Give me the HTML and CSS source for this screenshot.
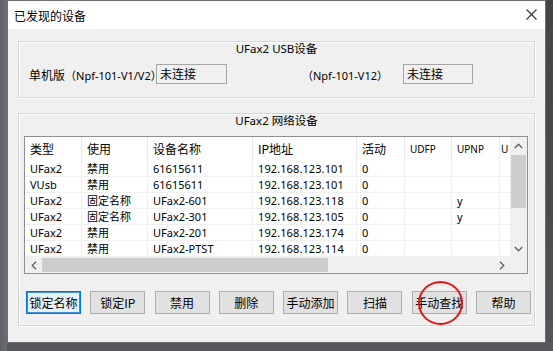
FILE: index.html
```html
<!DOCTYPE html>
<html lang="zh-CN">
<head>
<meta charset="utf-8">
<title>已发现的设备</title>
<link rel="stylesheet" href="styles.css">
</head>
<body>
<div class="screen">
  <div class="dialog">
    <div class="titlebar">
      <span class="title">已发现的设备</span>
      <svg class="close" width="11" height="11" viewBox="0 0 11 11"><path d="M0.5 0.5 L10.5 10.5 M10.5 0.5 L0.5 10.5" stroke="#333" stroke-width="1.1" fill="none"/></svg>
    </div>
    <div class="body">
      <div class="group usb">
        <div class="group-title">UFax2 USB设备</div>
        <div class="usb-row">
          <span class="lbl lbl1">单机版<span class="paren">（Npf-101-V1/V2）</span></span>
          <span class="status s1">未连接</span>
          <span class="lbl lbl2"><span class="paren">（Npf-101-V12）</span></span>
          <span class="status s2">未连接</span>
        </div>
      </div>
      <div class="group net">
        <div class="group-title">UFax2 网络设备</div>
        <div class="list">
          <div class="table">
            <div class="hd">类型</div><div class="hd">使用</div><div class="hd">设备名称</div><div class="hd">IP地址</div><div class="hd">活动</div><div class="hd lat">UDFP</div><div class="hd lat">UPNP</div><div class="hd lat last">U</div>

            <div class="c">UFax2</div><div class="c">禁用</div><div class="c">61615611</div><div class="c ip">192.168.123.101</div><div class="c">0</div><div class="c"></div><div class="c"></div><div class="c last"></div>
            <div class="c">VUsb</div><div class="c">禁用</div><div class="c">61615611</div><div class="c ip">192.168.123.101</div><div class="c">0</div><div class="c"></div><div class="c"></div><div class="c last"></div>
            <div class="c">UFax2</div><div class="c">固定名称</div><div class="c">UFax2-601</div><div class="c ip">192.168.123.118</div><div class="c">0</div><div class="c"></div><div class="c">y</div><div class="c last"></div>
            <div class="c">UFax2</div><div class="c">固定名称</div><div class="c">UFax2-301</div><div class="c ip">192.168.123.105</div><div class="c">0</div><div class="c"></div><div class="c">y</div><div class="c last"></div>
            <div class="c">UFax2</div><div class="c">禁用</div><div class="c">UFax2-201</div><div class="c ip">192.168.123.174</div><div class="c">0</div><div class="c"></div><div class="c"></div><div class="c last"></div>
            <div class="c">UFax2</div><div class="c">禁用</div><div class="c">UFax2-PTST</div><div class="c ip">192.168.123.114</div><div class="c">0</div><div class="c"></div><div class="c"></div><div class="c last"></div>
          </div>
          <div class="vscroll">
            <div class="sbtn"><svg width="9" height="6" viewBox="0 0 9 6"><path d="M0.8 5 L4.5 1.2 L8.2 5" stroke="#606060" stroke-width="1.3" fill="none"/></svg></div>
            <div class="vthumb"></div>
            <div class="vtrack"></div>
            <div class="sbtn"><svg width="9" height="6" viewBox="0 0 9 6"><path d="M0.8 1 L4.5 4.8 L8.2 1" stroke="#606060" stroke-width="1.3" fill="none"/></svg></div>
          </div>
          <div class="hscroll">
            <div class="hbtn"><svg width="6" height="9" viewBox="0 0 6 9"><path d="M5 0.8 L1.2 4.5 L5 8.2" stroke="#606060" stroke-width="1.3" fill="none"/></svg></div>
            <div class="hthumb"></div>
            <div class="htrack"></div>
            <div class="hbtn"><svg width="6" height="9" viewBox="0 0 6 9"><path d="M1 0.8 L4.8 4.5 L1 8.2" stroke="#606060" stroke-width="1.3" fill="none"/></svg></div>
          </div>
          <div class="corner"></div>
        </div>
        <div class="buttons">
          <button class="btn focus">锁定名称</button>
          <button class="btn">锁定IP</button>
          <button class="btn">禁用</button>
          <button class="btn">删除</button>
          <button class="btn">手动添加</button>
          <button class="btn">扫描</button>
          <button class="btn">手动查找</button>
          <button class="btn">帮助</button>
          <div class="mark"></div>
        </div>
      </div>
    </div>
  </div>
</div>
</body>
</html>
```

FILE: styles.css
```css
html, body {
  margin: 0;
  padding: 0;
}
body {
  width: 553px;
  height: 351px;
  overflow: hidden;
  font-family: "Noto Sans", "Noto Sans CJK SC", sans-serif;
  color: #000;
}
.screen {
  width: 553px;
  height: 351px;
  box-sizing: border-box;
  padding-left: 7px;
  background:
    linear-gradient(to right, #5f6368 0, #6b6e72 7px, transparent 7px),
    linear-gradient(to bottom, #444446 0, #4a4a4c 60%, #55575a 100%);
}
.dialog {
  width: 539px;
  height: 343px;
  box-sizing: border-box;
  border: 1px solid #707070;
  background: #f0f0f0;
  display: flex;
  flex-direction: column;
}
.titlebar {
  height: 28px;
  flex: none;
  background: #fff;
  display: flex;
  align-items: center;
  justify-content: space-between;
  padding: 0 8px 0 6px;
}
.title {
  font-family: "Noto Sans CJK SC", sans-serif;
  font-size: 12px;
  margin-top: 1px;
}
.close {
  display: block;
  margin-top: -1px;
}
.body {
  padding: 12px 10px 0 10px;
  display: flex;
  flex-direction: column;
}
.group {
  border: 1px solid #d5d5d5;
  box-shadow: inset 1px 1px 0 #fff, 1px 1px 0 #fff;
}
.group-title {
  height: 14px;
  line-height: 14px;
  text-align: center;
  font-size: 11.5px;
}
.usb {
  padding-bottom: 13px;
}
.usb-row {
  margin-top: 8px;
  display: flex;
  align-items: center;
  padding-left: 10px;
  height: 20px;
}
.lbl {
  font-family: "Noto Sans CJK SC", sans-serif;
  font-size: 12px;
  white-space: nowrap;
}
.paren {
  font-family: "Noto Sans", "Noto Sans CJK SC", sans-serif;
  font-size: 11px;
}
.lbl1 { width: 127px; }
.lbl2 { width: 101px; margin-left: 75px; }
.status {
  box-sizing: border-box;
  height: 20px;
  border: 1px solid #a5a5a5;
  padding-left: 3px;
  font-family: "Noto Sans CJK SC", sans-serif;
  font-size: 12px;
  line-height: 17px;
}
.s1 { width: 71px; }
.s2 { width: 70px; }
.net {
  margin-top: 15px;
  padding-bottom: 11px;
}
.list {
  margin: 8px 6px 0 5px;
  height: 138px;
  box-sizing: border-box;
  border: 1px solid #8e8f8f;
  background: #fff;
  display: grid;
  grid-template-columns: 485px 17px;
  grid-template-rows: 120px 16px;
}
.table {
  display: grid;
  grid-template-columns: 57px 66px 105px 104px 48px 47px 48px 10px;
  grid-template-rows: 24px repeat(6, 16px);
  overflow: hidden;
}
.hd {
  font-family: "Noto Sans CJK SC", sans-serif;
  font-size: 12px;
  line-height: 24px;
  padding-left: 5px;
  border-right: 1px solid #e8e8e8;
  white-space: nowrap;
  overflow: hidden;
}
.hd.lat {
  font-family: "Noto Sans", sans-serif;
  font-size: 10px;
}
.c {
  font-size: 11px;
  line-height: 15px;
  padding-left: 5px;
  border-right: 1px solid #f0f0f0;
  border-bottom: 1px solid #f0f0f0;
  white-space: nowrap;
  overflow: hidden;
}
.c.ip {
  letter-spacing: 0.1px;
}
.last {
  padding-left: 1px;
  border-right: none;
}
.vscroll {
  background: #f0f0f0;
  display: flex;
  flex-direction: column;
}
.sbtn {
  height: 17px;
  flex: none;
  display: flex;
  align-items: center;
  justify-content: center;
}
.vthumb {
  height: 53px;
  margin: 1px 1px 0 1px;
  background: #cdcdcd;
  flex: none;
}
.vtrack { flex: 1; }
.hscroll {
  background: #f0f0f0;
  display: flex;
}
.hbtn {
  width: 17px;
  flex: none;
  display: flex;
  align-items: center;
  justify-content: center;
}
.hthumb {
  width: 286px;
  margin: 1px 0;
  background: #cdcdcd;
  flex: none;
}
.htrack { flex: 1; }
.corner { background: #f0f0f0; }
.buttons {
  position: relative;
  margin: 17px 3px 0 7px;
  display: flex;
  justify-content: space-between;
}
.btn {
  width: 55px;
  height: 23px;
  box-sizing: border-box;
  padding: 0;
  border: 1px solid #adadad;
  background: #e1e1e1;
  font-family: "Noto Sans CJK SC", sans-serif;
  font-size: 12px;
  color: #000;
  white-space: nowrap;
}
.btn.focus {
  border: 1px solid #0078d7;
  box-shadow: inset 0 0 0 1px #3c8fd8;
  background: #e5f1fb;
}
.mark {
  position: absolute;
  left: 392px;
  top: -10px;
  width: 45px;
  height: 44px;
  box-sizing: border-box;
  border: 2.5px solid #e0161b;
  border-radius: 50%;
}
```
